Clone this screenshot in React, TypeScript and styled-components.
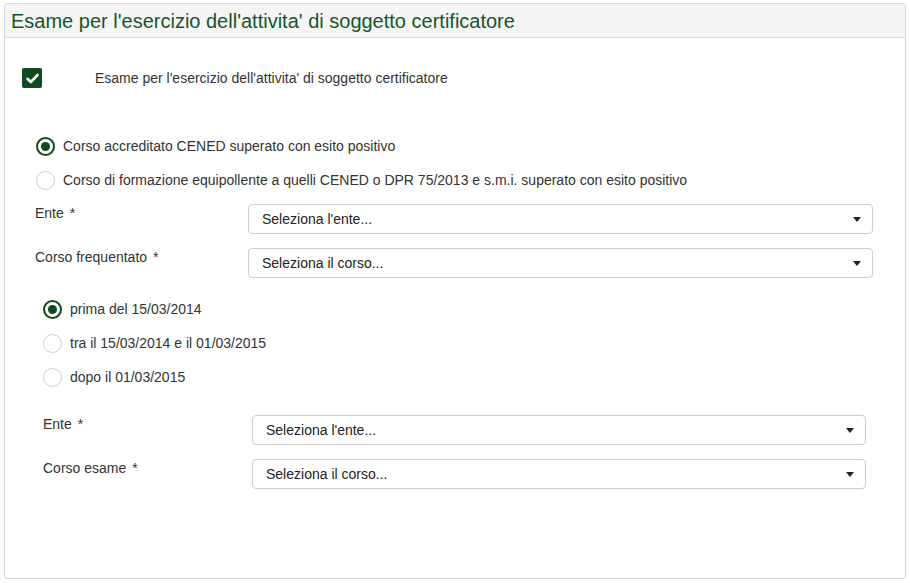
import React from "react";
import styled, { createGlobalStyle } from "styled-components";

const Global = createGlobalStyle`
  html, body { margin: 0; padding: 0; background: #fff; }
  body { font-family: "Liberation Sans", Arial, sans-serif; font-size: 14px; color: #333; }
  * { box-sizing: border-box; }
`;

const Page = styled.div`
  padding: 3px 4px 4px 4px;
`;

const Panel = styled.div`
  width: 902px;
  height: 576px;
  border: 1px solid #d6d6d6;
  border-radius: 3px;
  display: flex;
  flex-direction: column;
`;

const Header = styled.div`
  height: 34px;
  background: #f5f5f5;
  border-bottom: 1px solid #dcdcdc;
  padding: 5px 0 0 6px;
`;

const Title = styled.h3`
  margin: 0;
  font-size: 20px;
  font-weight: normal;
  line-height: 24px;
  color: #15572a;
`;

const Body = styled.div`
  padding: 30px 0 0 17px;
  display: flex;
  flex-direction: column;
`;

const CheckRow = styled.div`
  display: flex;
  align-items: center;
  gap: 53px;
  height: 20px;
`;

const CheckBox = styled.span`
  width: 20px;
  height: 20px;
  border-radius: 2px;
  background: #0f4a1f;
  display: flex;
  align-items: center;
  justify-content: center;
`;

const CheckLabel = styled.span`
  line-height: 20px;
`;

const RadioGroup = styled.div<{ $mt: number; $ml: number }>`
  margin-top: ${(p) => p.$mt}px;
  margin-left: ${(p) => p.$ml}px;
  display: flex;
  flex-direction: column;
  gap: 10px;
`;

const RadioRow = styled.label`
  display: flex;
  align-items: center;
  gap: 8px;
  height: 24px;
  line-height: 20px;
`;

const RadioCircle = styled.span<{ $checked?: boolean }>`
  width: 19px;
  height: 19px;
  border-radius: 50%;
  border: ${(p) => (p.$checked ? "2px solid #0f4a1f" : "1px solid #cfcfcf")};
  background: #fff;
  display: flex;
  align-items: center;
  justify-content: center;
  flex: none;
  &::after {
    content: "";
    display: ${(p) => (p.$checked ? "block" : "none")};
    width: 9px;
    height: 9px;
    border-radius: 50%;
    background: #0f4a1f;
  }
`;

const Fields = styled.div<{ $mt: number; $ml: number; $mr: number; $lw: number }>`
  margin-top: ${(p) => p.$mt}px;
  margin-left: ${(p) => p.$ml}px;
  margin-right: ${(p) => p.$mr}px;
  display: flex;
  flex-direction: column;
  gap: 14px;
  --lw: ${(p) => p.$lw}px;
`;

const FieldRow = styled.div`
  display: flex;
  align-items: flex-start;
`;

const FieldLabel = styled.span`
  width: var(--lw);
  flex: none;
  line-height: 18px;
`;

const Req = styled.span`
  margin-left: 6px;
`;

const Select = styled.div`
  flex: 1;
  height: 30px;
  border: 1px solid #cccccc;
  border-radius: 4px;
  display: flex;
  align-items: center;
  justify-content: space-between;
  padding: 0 11px 0 13px;
  color: #222;
  background: #fff;
`;

const Caret = styled.span`
  width: 0;
  height: 0;
  border-left: 4px solid transparent;
  border-right: 4px solid transparent;
  border-top: 5px solid #222;
  margin-top: 1px;
`;

function Field({ label, placeholder }: { label: string; placeholder: string }) {
  return (
    <FieldRow>
      <FieldLabel>
        {label}
        <Req>*</Req>
      </FieldLabel>
      <Select>
        <span>{placeholder}</span>
        <Caret />
      </Select>
    </FieldRow>
  );
}

function Radio({ checked, children }: { checked?: boolean; children: React.ReactNode }) {
  return (
    <RadioRow>
      <RadioCircle $checked={checked} />
      <span>{children}</span>
    </RadioRow>
  );
}

export default function App() {
  return (
    <>
      <Global />
      <Page>
        <Panel>
          <Header>
            <Title>Esame per l'esercizio dell'attivita' di soggetto certificatore</Title>
          </Header>
          <Body>
            <CheckRow>
              <CheckBox>
                <svg width="13" height="11" viewBox="0 0 13 11">
                  <path d="M1.5 5.8 L4.8 9 L11.5 2" stroke="#fff" strokeWidth="2.6" fill="none" strokeLinecap="round" strokeLinejoin="round" />
                </svg>
              </CheckBox>
              <CheckLabel>Esame per l'esercizio dell'attivita' di soggetto certificatore</CheckLabel>
            </CheckRow>
            <RadioGroup $mt={46} $ml={14}>
              <Radio checked>Corso accreditato CENED superato con esito positivo</Radio>
              <Radio>Corso di formazione equipollente a quelli CENED o DPR 75/2013 e s.m.i. superato con esito positivo</Radio>
            </RadioGroup>
            <Fields $mt={12} $ml={13} $mr={32} $lw={213}>
              <Field label="Ente" placeholder="Seleziona l'ente..." />
              <Field label="Corso frequentato" placeholder="Seleziona il corso..." />
            </Fields>
            <RadioGroup $mt={19} $ml={21}>
              <Radio checked>prima del 15/03/2014</Radio>
              <Radio>tra il 15/03/2014 e il 01/03/2015</Radio>
              <Radio>dopo il 01/03/2015</Radio>
            </RadioGroup>
            <Fields $mt={26} $ml={21} $mr={39} $lw={209}>
              <Field label="Ente" placeholder="Seleziona l'ente..." />
              <Field label="Corso esame" placeholder="Seleziona il corso..." />
            </Fields>
          </Body>
        </Panel>
      </Page>
    </>
  );
}
